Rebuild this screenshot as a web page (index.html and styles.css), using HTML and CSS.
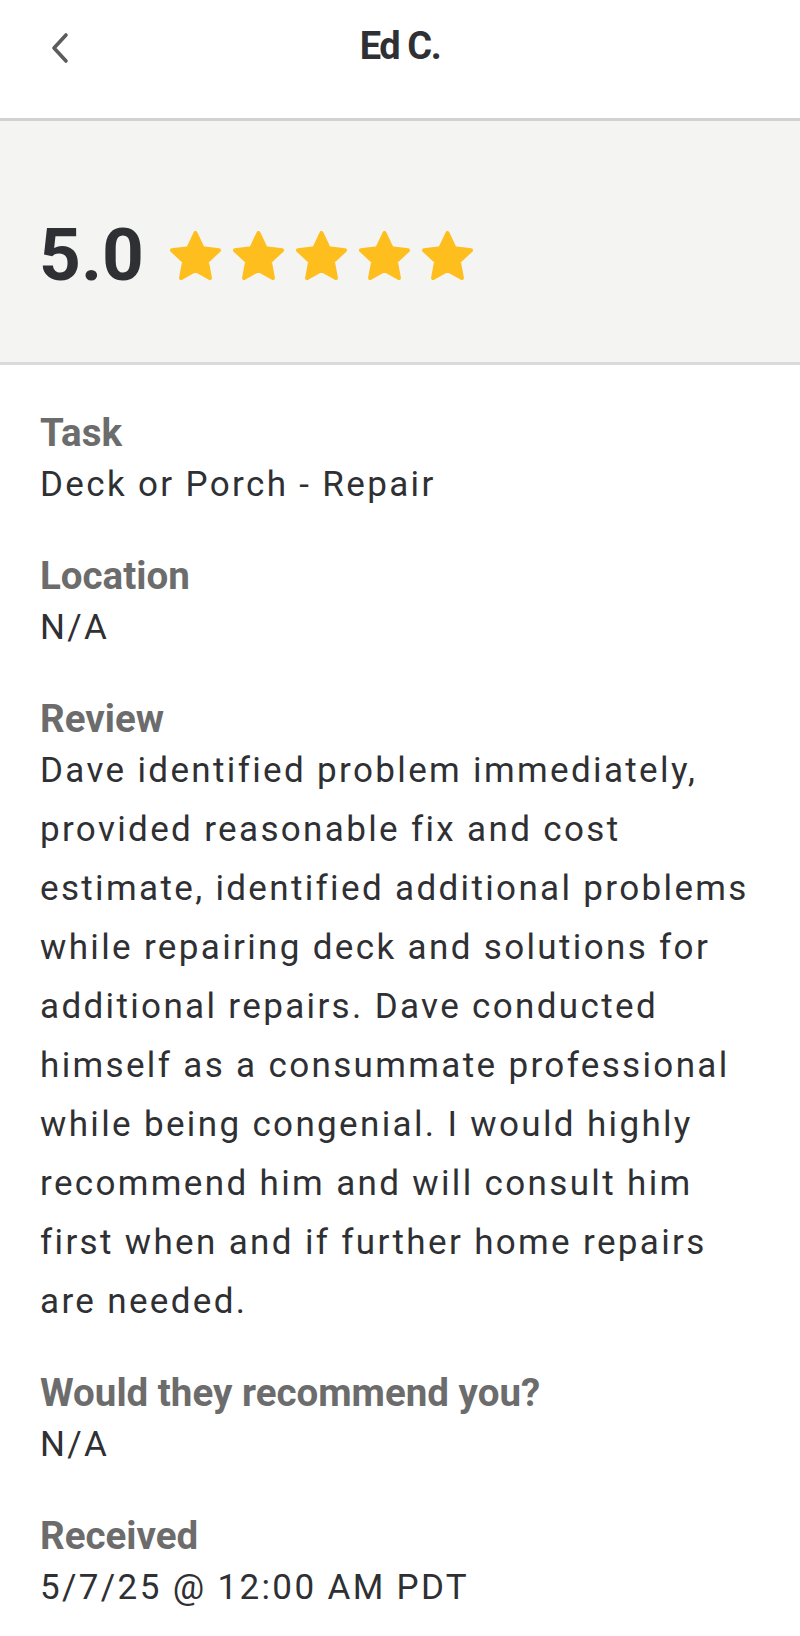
FILE: index.html
```html
<!DOCTYPE html>
<html lang="en">
<head>
<meta charset="utf-8">
<title>Ed C.</title>
<link rel="stylesheet" href="styles.css">
</head>
<body>
<header class="topbar">
  <button class="back" aria-label="Back">
    <svg width="20" height="32" viewBox="0 0 20 32"><path d="M16 3 L4 16 L16 29" fill="none" stroke="#5c5c5c" stroke-width="3.6" stroke-linecap="round" stroke-linejoin="round"/></svg>
  </button>
  <h1 class="title">Ed C.</h1>
  <span class="spacer"></span>
</header>
<section class="rating">
  <span class="score">5.0</span>
  <div class="stars">
    <svg class="star" viewBox="1.9 1.8 20.2 19.4"><path d="M12 2.6l2.8 6 6.5.8-4.8 4.5 1.2 6.5L12 17.2l-5.7 3.2 1.2-6.5-4.8-4.5 6.5-.8z"/></svg>
    <svg class="star" viewBox="1.9 1.8 20.2 19.4"><path d="M12 2.6l2.8 6 6.5.8-4.8 4.5 1.2 6.5L12 17.2l-5.7 3.2 1.2-6.5-4.8-4.5 6.5-.8z"/></svg>
    <svg class="star" viewBox="1.9 1.8 20.2 19.4"><path d="M12 2.6l2.8 6 6.5.8-4.8 4.5 1.2 6.5L12 17.2l-5.7 3.2 1.2-6.5-4.8-4.5 6.5-.8z"/></svg>
    <svg class="star" viewBox="1.9 1.8 20.2 19.4"><path d="M12 2.6l2.8 6 6.5.8-4.8 4.5 1.2 6.5L12 17.2l-5.7 3.2 1.2-6.5-4.8-4.5 6.5-.8z"/></svg>
    <svg class="star" viewBox="1.9 1.8 20.2 19.4"><path d="M12 2.6l2.8 6 6.5.8-4.8 4.5 1.2 6.5L12 17.2l-5.7 3.2 1.2-6.5-4.8-4.5 6.5-.8z"/></svg>
  </div>
</section>
<main class="details">
  <div class="field">
    <div class="label">Task</div>
    <div class="value">Deck or Porch - Repair</div>
  </div>
  <div class="field">
    <div class="label">Location</div>
    <div class="value">N/A</div>
  </div>
  <div class="field">
    <div class="label">Review</div>
    <div class="value">Dave identified problem immediately,<br>provided reasonable fix and cost<br>estimate, identified additional problems<br>while repairing deck and solutions for<br>additional repairs. Dave conducted<br>himself as a consummate professional<br>while being congenial. I would highly<br>recommend him and will consult him<br>first when and if further home repairs<br>are needed.</div>
  </div>
  <div class="field">
    <div class="label">Would they recommend you?</div>
    <div class="value">N/A</div>
  </div>
  <div class="field">
    <div class="label">Received</div>
    <div class="value">5/7/25 @ 12:00 AM PDT</div>
  </div>
</main>
</body>
</html>
```
FILE: styles.css
```css
* { box-sizing: border-box; }
html, body { margin: 0; padding: 0; background: #ffffff; }
body {
  font-family: Roboto, "Liberation Sans", Arial, sans-serif;
  color: #2f3033;
  width: 800px;
}
.topbar {
  height: 121px;
  display: grid;
  grid-template-columns: 120px 1fr 120px;
  align-items: start;
  border-bottom: 3px solid #d2d2d2;
}
.back {
  margin: 31px 0 0 48px;
  padding: 0;
  border: 0;
  background: none;
  width: 24px;
  height: 34px;
  display: flex;
  align-items: center;
  justify-content: center;
}
.title {
  margin: 20px 0 0;
  text-align: center;
  font-size: 38px;
  line-height: 52px;
  font-weight: 700;
  letter-spacing: -1.4px;
  color: #2f3033;
}
.rating {
  height: 244px;
  background: #f4f4f2;
  border-bottom: 3px solid #dadada;
  display: flex;
  align-items: center;
  padding: 28px 0 0 39px;
  gap: 26px;
}
.score {
  font-size: 73px;
  font-weight: 700;
  letter-spacing: 0;
  line-height: 1;
  color: #2f3033;
}
.stars {
  display: flex;
  gap: 12px;
}
.star {
  width: 51px;
  height: 49px;
  fill: #febe1e;
  stroke: #febe1e;
  stroke-width: 1.6;
  stroke-linejoin: round;
}
.details {
  padding: 45px 16px 40px 40px;
  display: flex;
  flex-direction: column;
  gap: 39px;
}
.label {
  font-size: 38.5px;
  line-height: 45px;
  font-weight: 700;
  color: #6c6c6c;
  letter-spacing: 0;
}
.value {
  font-size: 35px;
  line-height: 59px;
  font-weight: 400;
  letter-spacing: 2.35px;
  white-space: nowrap;
  color: #2f3033;
}
```
